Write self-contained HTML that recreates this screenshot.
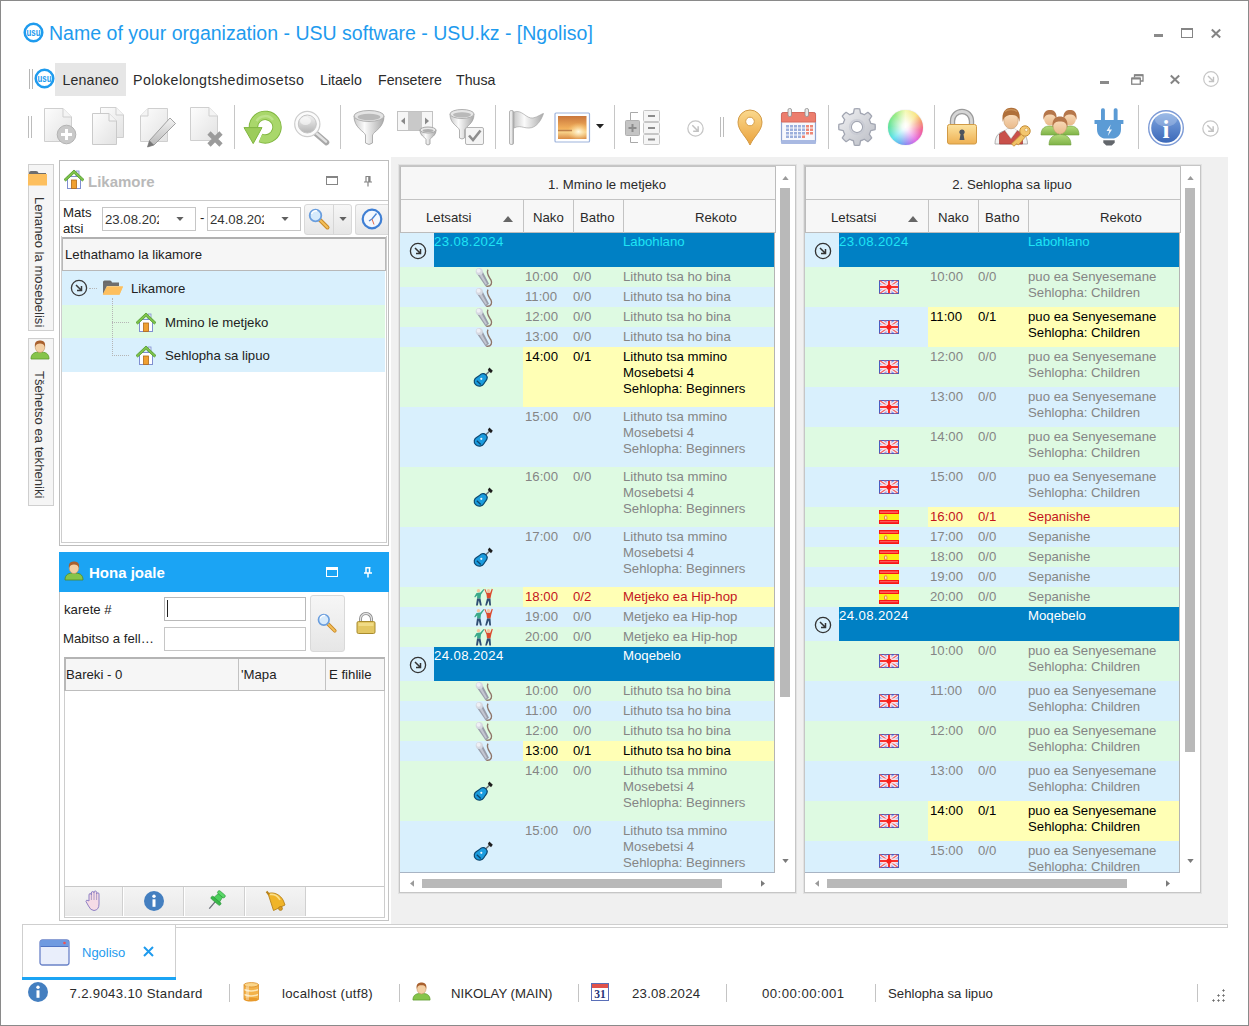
<!DOCTYPE html>
<html lang="st"><head><meta charset="utf-8"><title>Ngoliso</title>
<style>
*{box-sizing:border-box;margin:0;padding:0}
html,body{width:1249px;height:1026px;overflow:hidden;background:#fff}
body{font-family:"Liberation Sans","DejaVu Sans",sans-serif;font-size:13px;color:#222}
#win{position:absolute;left:0;top:0;width:1249px;height:1026px;background:#fff;overflow:hidden}
#frame{position:absolute;left:0;top:0;width:1249px;height:1026px;border:1px solid #8a8a8a;z-index:9}
.a{position:absolute}
.t{position:absolute;white-space:nowrap;line-height:1}
svg{position:absolute;overflow:visible}
/* title */
#title{left:49px;top:23.5px;font-size:19.55px;color:#1e9bee;letter-spacing:0px}
.menu{font-size:14.2px;color:#2b2b2b;top:72.5px}
/* main gray */
#main{left:391px;top:157px;width:837px;height:767px;background:#f0f0f0}
/* grids */
.grid{position:absolute;top:165px;width:397px;height:728px;background:#fff;border:1px solid #c6c6c6;box-shadow:0 0 0 1px #e2e2e2}
.ghead{position:absolute;left:0;top:0;width:376px;height:67px;background:#f7f7f7;border:1px solid #bcbcbc;border-top-color:#c4c4c4}
.gh{position:absolute;font-size:13.2px;color:#2a2a2a;white-space:nowrap;line-height:1}
.row{position:absolute;left:0;width:374px}
.g{background:#defae2}
.b{background:#d9f0fd}
.y{position:absolute;left:123px;right:0;top:0;bottom:0;background:#ffffb5}
.c{position:absolute;white-space:nowrap;line-height:16px;font-size:13.2px;color:#858585;top:2px}
.c1{left:125px}.c2{left:173px}.c3{left:223px}
.k .c{color:#000}
.r .c{color:#c3161c}
.grp{position:absolute;left:34px;right:0;top:0;bottom:0;background:#0080c4}
.grp .c{color:#fff;top:1px}
.grp.cy .c{color:#1fe5f5}
/* left */
.vt{position:absolute;left:28px;width:26px;border:1px solid #cfcfcf;background:#f5f5f5}
.vtx{position:absolute;white-space:nowrap;font-size:13.1px;color:#333;transform-origin:0 0;transform:rotate(90deg);line-height:1}
.panel{position:absolute;left:59px;width:330px;background:#fff;border:1px solid #bdbdbd}
.lt{position:absolute;white-space:nowrap;font-size:13.2px;color:#222;line-height:1}
.inp{position:absolute;background:#fff;border:1px solid #c6c6c6;overflow:hidden}
.btn{position:absolute;border:1px solid #d9d9d9;border-radius:3px;background:linear-gradient(#f6f6f6,#e6e6e6)}
.bb{position:absolute;top:887px;height:29px;width:60px;background:linear-gradient(#f4f4f4,#e9e9e9);border-right:1px solid #d0d0d0}
.st{position:absolute;white-space:nowrap;font-size:13.2px;color:#2a2a2a;line-height:1;top:987px}
.ss{position:absolute;top:984px;width:1px;height:18px;background:#c4c4c4}

</style></head>
<body>
<div id="win">
<!-- title bar -->
<svg class="a" style="left:23.200px;top:21.500px" width="21" height="21" viewBox="0 0 21 21"><circle cx="10.500" cy="10.500" r="8.800" fill="#fff" stroke="#1e9bee" stroke-width="2.500"/><text x="10.500" y="13.600" font-size="10.500" font-weight="bold" text-anchor="middle" fill="#1e9bee" font-family="Liberation Sans, sans-serif" textLength="14" lengthAdjust="spacingAndGlyphs">usu</text></svg>
<div class="t" id="title">Name of your organization - USU software - USU.kz - [Ngoliso]</div>
<div class="a" style="left:1154px;top:34px;width:9px;height:3px;background:#8a8a8a"></div>
<div class="a" style="left:1181px;top:28px;width:12px;height:10px;border:1.500px solid #858585;border-top-width:2.500px"></div>
<svg style="left:1211px;top:29px" width="10" height="9" viewBox="0 0 10 9"><path d="M0.800 0.500L9.200 8.500M9.200 0.500L0.800 8.500" stroke="#858585" stroke-width="2" fill="none"/></svg>
<!-- menu bar -->
<div class="a" style="left:29px;top:69px;width:1px;height:20px;background:#b5b5b5"></div>
<div class="a" style="left:31.500px;top:69px;width:1px;height:20px;background:#b5b5b5"></div>
<div class="a" style="left:55px;top:63px;width:71px;height:33px;background:#e6e6e6"></div>
<svg class="a" style="left:34.400px;top:68.300px" width="21" height="21" viewBox="0 0 21 21"><circle cx="10.500" cy="10.500" r="8.800" fill="#fff" stroke="#1e9bee" stroke-width="2.500"/><text x="10.500" y="13.600" font-size="10.500" font-weight="bold" text-anchor="middle" fill="#1e9bee" font-family="Liberation Sans, sans-serif" textLength="14" lengthAdjust="spacingAndGlyphs">usu</text></svg>
<div class="t menu" style="left:62.500px;letter-spacing:.15px">Lenaneo</div>
<div class="t menu" style="left:133px;letter-spacing:.42px">Polokelongtshedimosetso</div>
<div class="t menu" style="left:320px">Litaelo</div>
<div class="t menu" style="left:378px">Fensetere</div>
<div class="t menu" style="left:456px">Thusa</div>
<div class="a" style="left:1100px;top:81px;width:9px;height:3px;background:#8a8a8a"></div>
<svg style="left:1131px;top:74px" width="13" height="11" viewBox="0 0 13 11"><path d="M3.500 3.500V1H12V7H9.500" stroke="#858585" stroke-width="1.300" fill="none"/><path d="M3.500 1.300H12" stroke="#858585" stroke-width="2"/><rect x="0.700" y="4.200" width="8.600" height="6" stroke="#858585" stroke-width="1.300" fill="#fff"/><path d="M0.700 4.500H9.300" stroke="#858585" stroke-width="2"/></svg>
<svg style="left:1170px;top:75px" width="10" height="9" viewBox="0 0 10 9"><path d="M0.800 0.500L9.200 8.500M9.200 0.500L0.800 8.500" stroke="#858585" stroke-width="2" fill="none"/></svg>
<svg style="left:1203px;top:71px" width="16" height="16" viewBox="0 0 16 16"><circle cx="8" cy="8" r="7.300" fill="#fff" stroke="#c6c6c6" stroke-width="1.200"/><path d="M5 5L10.300 10.300M10.500 5.800V10.500H5.800" stroke="#c2c2c2" stroke-width="1.400" fill="none"/></svg>
<!-- toolbar -->
<svg width="0" height="0" style="position:absolute"><defs>
<linearGradient id="pg" x1="0" y1="0" x2="1" y2="1"><stop offset="0" stop-color="#fdfdfd"/><stop offset="1" stop-color="#e2e2e2"/></linearGradient>
<linearGradient id="sv" x1="0" y1="0" x2="1" y2="0"><stop offset="0" stop-color="#c9c9c9"/><stop offset=".35" stop-color="#fbfbfb"/><stop offset="1" stop-color="#a9a9a9"/></linearGradient>
<linearGradient id="sv2" x1="0" y1="0" x2="0" y2="1"><stop offset="0" stop-color="#f4f4f4"/><stop offset="1" stop-color="#b5b5b5"/></linearGradient>
<linearGradient id="gr" x1="0" y1="0" x2="0" y2="1"><stop offset="0" stop-color="#b5dd6e"/><stop offset="1" stop-color="#6fa82e"/></linearGradient>
<linearGradient id="or" x1="0" y1="0" x2="0" y2="1"><stop offset="0" stop-color="#fbd98e"/><stop offset="1" stop-color="#eaa23c"/></linearGradient>
<linearGradient id="lk" x1="0" y1="0" x2="0" y2="1"><stop offset="0" stop-color="#fce3a0"/><stop offset="1" stop-color="#eeb052"/></linearGradient>
<linearGradient id="sun" x1="0" y1="0" x2="0" y2="1"><stop offset="0" stop-color="#c9763c"/><stop offset=".55" stop-color="#f3b15c"/><stop offset=".7" stop-color="#f8d28a"/><stop offset="1" stop-color="#d98a44"/></linearGradient>
<radialGradient id="sunr" cx=".72" cy=".68" r=".4"><stop offset="0" stop-color="#fffbe6"/><stop offset="1" stop-color="#fbd27d" stop-opacity="0"/></radialGradient>
<linearGradient id="bl" x1="0" y1="0" x2="0" y2="1"><stop offset="0" stop-color="#7ea6e0"/><stop offset="1" stop-color="#3b68b8"/></linearGradient>
<linearGradient id="plg" x1="0" y1="0" x2="0" y2="1"><stop offset="0" stop-color="#6aa5dc"/><stop offset="1" stop-color="#3b78c0"/></linearGradient>
<linearGradient id="skin" x1="0" y1="0" x2="0" y2="1"><stop offset="0" stop-color="#fbe0c0"/><stop offset="1" stop-color="#e9b98a"/></linearGradient>
<linearGradient id="grn" x1="0" y1="0" x2="0" y2="1"><stop offset="0" stop-color="#b4da7a"/><stop offset="1" stop-color="#7fb347"/></linearGradient>
<linearGradient id="gear" x1="0" y1="0" x2="1" y2="1"><stop offset="0" stop-color="#f2f2f4"/><stop offset="1" stop-color="#b9bcc4"/></linearGradient>
</defs></svg>
<div class="a" style="left:28px;top:116px;width:1px;height:22px;background:#bcbcbc"></div>
<div class="a" style="left:31px;top:116px;width:1px;height:22px;background:#bcbcbc"></div>
<!-- 1 new -->
<svg style="left:40px;top:104px" width="40" height="44" viewBox="40 104 40 44"><path d="M44.5 108.5H63L71.5 117V141.5H44.5Z" fill="url(#pg)" stroke="#cfcfcf"/><path d="M63 108.5V117H71.5" fill="#f4f4f4" stroke="#cfcfcf"/><circle cx="66.5" cy="134.5" r="9.3" fill="#c9c9c9" stroke="#b3b3b3"/><path d="M66.5 129V140M61 134.5H72" stroke="#fff" stroke-width="3"/></svg>
<!-- 2 copy -->
<svg style="left:88px;top:104px" width="40" height="44" viewBox="88 104 40 44"><path d="M100.500 107.500H116L123.500 115V137.500H100.500Z" fill="url(#pg)" stroke="#cfcfcf"/><path d="M116 107.500V115H123.500" fill="#f4f4f4" stroke="#cfcfcf"/><path d="M92.500 113.500H109L116.500 121V144.500H92.500Z" fill="url(#pg)" stroke="#cacaca"/><path d="M109 113.500V121H116.500" fill="#f4f4f4" stroke="#cacaca"/></svg>
<!-- 3 edit -->
<svg style="left:136px;top:104px" width="42" height="46" viewBox="136 104 42 46"><path d="M148 108.500H167.500V141.500H140.500V116Z" fill="url(#pg)" stroke="#cfcfcf"/><path d="M148 108.500V116H140.500" fill="#f4f4f4" stroke="#cfcfcf"/><path d="M170 118L175.500 123.500L154 145L147.500 147L149.500 140.500Z" fill="url(#sv2)" stroke="#8e8e8e" stroke-width=".8"/><path d="M149.500 140.500L154 145L147.500 147Z" fill="#777"/></svg>
<!-- 4 delete -->
<svg style="left:186px;top:104px" width="42" height="46" viewBox="186 104 42 46"><path d="M190.500 107.500H209L217.500 116V140.500H190.500Z" fill="url(#pg)" stroke="#cfcfcf"/><path d="M209 107.500V116H217.500" fill="#f4f4f4" stroke="#cfcfcf"/><path d="M209 133L221 145M221 133L209 145" stroke="#9b9b9b" stroke-width="4.600" stroke-linecap="butt"/></svg>
<div class="a" style="left:234px;top:105px;width:1px;height:44px;background:#c6c6c6"></div>
<!-- 5 refresh -->
<svg style="left:240px;top:106px" width="46" height="44" viewBox="240 106 46 44"><path d="M253.400 127.200A11.800 11.800 0 1 1 260.500 138" fill="none" stroke="#7fb53e" stroke-width="9.400"/><path d="M253.400 127.200A11.800 11.800 0 1 1 260.500 138" fill="none" stroke="#a9d76b" stroke-width="7.600"/><path d="M256.500 121A10 10 0 0 1 273 120" fill="none" stroke="#c2e592" stroke-width="2.500" opacity=".8"/><path d="M244 127.600H262L253.200 143.600Z" fill="#9ccc5a" stroke="#7fb53e" stroke-width="1" stroke-linejoin="round"/></svg>
<!-- 6 search -->
<svg style="left:290px;top:106px" width="44" height="44" viewBox="290 106 44 44"><path d="M316 133.500L326.500 142.500" stroke="#a8a8a8" stroke-width="5.600" stroke-linecap="round"/><path d="M316 133L326 141.700" stroke="#e2e2e2" stroke-width="2.400" stroke-linecap="round"/><circle cx="307.300" cy="124" r="12.600" fill="#fbfbfb" stroke="#cdcdcd" stroke-width="1.200"/><circle cx="307.300" cy="124" r="9" fill="url(#sv2)" stroke="#c4c4c4" stroke-width="1"/><ellipse cx="305.500" cy="121" rx="5.500" ry="4" fill="#fff" opacity=".55"/></svg>
<div class="a" style="left:340px;top:105px;width:1px;height:44px;background:#c6c6c6"></div>
<!-- 7 funnel -->
<svg style="left:350px;top:106px" width="40" height="42" viewBox="350 106 40 42"><path d="M354 116C354 128 364 131 365.500 135V143Q369 146 372.500 143V135C374 131 384 128 384 116Z" fill="url(#sv)" stroke="#a0a0a0" stroke-width=".8"/><ellipse cx="369" cy="116" rx="15" ry="5.500" fill="#e4e4e4" stroke="#b0b0b0"/><ellipse cx="369" cy="117" rx="11.500" ry="3.300" fill="#b9b9b9"/></svg>
<!-- 8 column filter -->
<svg style="left:394px;top:106px" width="46" height="42" viewBox="394 106 46 42"><rect x="397.500" y="111.500" width="35" height="19" fill="#f6f6f6" stroke="#c2c2c2"/><rect x="408" y="112" width="14" height="18" fill="#c9c9c9"/><path d="M405 117.500V124.500L401 121Z" fill="#8a8a8a"/><path d="M425 117.500V124.500L429 121Z" fill="#8a8a8a"/><path d="M420 130C420 136 425 137 426 139.500V144Q428 146 430 144V139.500C431 137 436 136 436 130Z" fill="url(#sv)" stroke="#9a9a9a" stroke-width=".8"/><ellipse cx="428" cy="130" rx="8" ry="3" fill="#e8e8e8" stroke="#a8a8a8"/><ellipse cx="428" cy="130.500" rx="5.500" ry="1.600" fill="#b0b0b0"/></svg>
<!-- 9 funnel check -->
<svg style="left:446px;top:106px" width="42" height="42" viewBox="446 106 42 42"><path d="M450 114C450 124 458 126 459.500 130V138Q462 140 464.500 138V130C466 126 474 124 474 114Z" fill="url(#sv)" stroke="#a0a0a0" stroke-width=".8"/><ellipse cx="462" cy="114" rx="12" ry="4.500" fill="#e6e6e6" stroke="#b0b0b0"/><ellipse cx="462" cy="114.800" rx="9" ry="2.600" fill="#b9b9b9"/><rect x="465.500" y="127.500" width="18" height="17" rx="1.500" fill="#f4f4f4" stroke="#b4b4b4"/><path d="M469 135.500L473 140L480.500 130.500" fill="none" stroke="#8e8e8e" stroke-width="2.600"/></svg>
<div class="a" style="left:495px;top:105px;width:1px;height:44px;background:#c6c6c6"></div>
<!-- 10 flag -->
<svg style="left:505px;top:106px" width="42" height="42" viewBox="505 106 42 42"><path d="M514 112C522 109 526 119 533 118C538 117 541 114 543.500 113.500C541 121 536 128 529 128C523 128 520 125 514 128Z" fill="url(#sv)" stroke="#a8a8a8" stroke-width=".7"/><rect x="509.500" y="110.500" width="4" height="34" rx="1.500" fill="url(#sv)" stroke="#a0a0a0" stroke-width=".7"/></svg>
<!-- 11 image -->
<svg style="left:553px;top:110px" width="40" height="34" viewBox="553 110 40 34"><rect x="555" y="113" width="34.500" height="29" rx="1" fill="#fff" stroke="#9db3dc" stroke-width="1.200"/><rect x="558" y="116" width="28.500" height="23" fill="url(#sun)"/><rect x="558" y="116" width="28.500" height="23" fill="url(#sunr)"/><path d="M558 130.500H572" stroke="#a7663a" stroke-width="1.500" opacity=".7"/></svg>
<svg style="left:596px;top:124px" width="8" height="5" viewBox="0 0 8 5"><path d="M0 0H8L4 4.500Z" fill="#222"/></svg>
<div class="a" style="left:614px;top:105px;width:1px;height:44px;background:#c6c6c6"></div>
<!-- 12 tree -->
<svg style="left:622px;top:106px" width="42" height="42" viewBox="622 106 42 42"><path d="M638 112.500H630.500V120M630.500 137V142.500H638" fill="none" stroke="#a9a9a9"/><rect x="625.500" y="120.500" width="14" height="15" rx="1" fill="#c4c4c4" stroke="#b0b0b0"/><path d="M632.500 124V132M628.500 128H636.500" stroke="#8c8c8c" stroke-width="2"/><rect x="643.500" y="110.500" width="16" height="11" rx="1" fill="#f5f5f5" stroke="#c6c6c6"/><rect x="643.500" y="122.500" width="16" height="11" rx="1" fill="#f5f5f5" stroke="#c6c6c6"/><rect x="643.500" y="134.500" width="16" height="10" rx="1" fill="#f5f5f5" stroke="#c6c6c6"/><path d="M648 116H655M648 128H655M648 139.500H655" stroke="#8c8c8c" stroke-width="2"/></svg>
<svg style="left:687px;top:120px" width="17" height="17" viewBox="0 0 16 16"><circle cx="8" cy="8" r="7.200" fill="#fff" stroke="#c6c6c6" stroke-width="1.200"/><path d="M5 5L10.300 10.300M10.500 5.800V10.500H5.800" stroke="#c2c2c2" stroke-width="1.400" fill="none"/></svg>
<div class="a" style="left:720px;top:117px;width:1px;height:20px;background:#bcbcbc"></div>
<div class="a" style="left:723px;top:117px;width:1px;height:20px;background:#bcbcbc"></div>
<!-- 13 pin -->
<svg style="left:734px;top:106px" width="34" height="42" viewBox="734 106 34 42"><path d="M750 145C746 136 738 131 738 122A12 12 0 0 1 762 122C762 131 754 136 750 145Z" fill="url(#or)" stroke="#d29a45" stroke-width="1"/><circle cx="750" cy="121.500" r="4.300" fill="#fff" stroke="#d8a04a"/></svg>
<!-- 14 calendar -->
<svg style="left:778px;top:106px" width="42" height="42" viewBox="778 106 42 42"><rect x="781.500" y="112.500" width="34" height="31" rx="2" fill="#f7f8fc" stroke="#8fa3d0" stroke-width="1.200"/><path d="M781.500 122V114.500Q781.500 112.500 783.500 112.500H813.500Q815.500 112.500 815.500 114.500V122Z" fill="#ec7d6d" stroke="#d66a5c"/><rect x="781" y="140" width="35" height="4" rx="1.500" fill="#a9b9e2"/><rect x="788" y="108.500" width="3.500" height="8" rx="1.500" fill="#e8e8e8" stroke="#8d8d8d" stroke-width=".8"/><rect x="805" y="108.500" width="3.500" height="8" rx="1.500" fill="#e8e8e8" stroke="#8d8d8d" stroke-width=".8"/><g fill="#9db0dc"><rect x="786" y="125" width="3" height="2.500"/><rect x="790" y="125" width="3" height="2.500"/><rect x="794" y="125" width="3" height="2.500"/><rect x="798" y="125" width="3" height="2.500"/><rect x="802" y="125" width="3" height="2.500"/><rect x="786" y="128.500" width="3" height="2.500"/><rect x="790" y="128.500" width="3" height="2.500"/><rect x="794" y="128.500" width="3" height="2.500"/><rect x="798" y="128.500" width="3" height="2.500"/><rect x="802" y="128.500" width="3" height="2.500"/><rect x="786" y="132" width="3" height="2.500"/><rect x="790" y="132" width="3" height="2.500"/><rect x="794" y="132" width="3" height="2.500"/><rect x="798" y="132" width="3" height="2.500"/><rect x="802" y="132" width="3" height="2.500"/><rect x="786" y="135.500" width="3" height="2.500"/><rect x="790" y="135.500" width="3" height="2.500"/><rect x="794" y="135.500" width="3" height="2.500"/><rect x="798" y="135.500" width="3" height="2.500"/></g><g fill="#ef8877"><rect x="806" y="125" width="3" height="2.500"/><rect x="810" y="125" width="3" height="2.500"/><rect x="806" y="128.500" width="3" height="2.500"/><rect x="810" y="128.500" width="3" height="2.500"/><rect x="806" y="132" width="3" height="2.500"/><rect x="810" y="132" width="3" height="2.500"/><rect x="802" y="135.500" width="3" height="2.500"/></g></svg>
<div class="a" style="left:828px;top:105px;width:1px;height:44px;background:#c6c6c6"></div>
<!-- 15 gear -->
<svg style="left:835.500px;top:106.200px" width="42" height="42" viewBox="-21 -21 42 42"><path d="M-3.56 -13.75L-2.70 -18.10A18.30 18.30 0 0 1 2.70 -18.10L3.56 -13.75A14.20 14.20 0 0 1 7.21 -12.24L10.89 -14.71A18.30 18.30 0 0 1 14.71 -10.89L12.24 -7.21A14.20 14.20 0 0 1 13.75 -3.56L18.10 -2.70A18.30 18.30 0 0 1 18.10 2.70L13.75 3.56A14.20 14.20 0 0 1 12.24 7.21L14.71 10.89A18.30 18.30 0 0 1 10.89 14.71L7.21 12.24A14.20 14.20 0 0 1 3.56 13.75L2.70 18.10A18.30 18.30 0 0 1 -2.70 18.10L-3.56 13.75A14.20 14.20 0 0 1 -7.21 12.24L-10.89 14.71A18.30 18.30 0 0 1 -14.71 10.89L-12.24 7.21A14.20 14.20 0 0 1 -13.75 3.56L-18.10 2.70A18.30 18.30 0 0 1 -18.10 -2.70L-13.75 -3.56A14.20 14.20 0 0 1 -12.24 -7.21L-14.71 -10.89A18.30 18.30 0 0 1 -10.89 -14.71L-7.21 -12.24A14.20 14.20 0 0 1 -3.56 -13.75Z" fill="url(#gear)" stroke="#a2a6b2" stroke-width="1.300" stroke-linejoin="round"/><circle r="7.300" fill="none" stroke="#c4c8d2" stroke-width="1.500" opacity=".7"/><circle r="5.600" fill="#fff" stroke="#a2a6b2" stroke-width="1.100"/></svg>
<!-- 16 wheel -->
<div class="a" style="left:888px;top:110px;width:35px;height:35px;border-radius:50%;background:radial-gradient(circle at 50% 48%,#fff 0,rgba(255,255,255,.9) 14%,rgba(255,255,255,0) 72%),conic-gradient(from 0deg,#f2f8a8 0deg,#f8e070 40deg,#f28a60 70deg,#f0508c 100deg,#e25ee0 140deg,#9080f0 175deg,#60b0f0 200deg,#50e0e8 230deg,#50e090 275deg,#84e870 320deg,#f2f8a8 360deg);box-shadow:0 0 1px rgba(120,120,120,.5)"></div>
<div class="a" style="left:934px;top:105px;width:1px;height:44px;background:#c6c6c6"></div>
<!-- 17 lock -->
<svg style="left:944px;top:106px" width="38" height="42" viewBox="944 106 38 42"><path d="M952.500 126V121A9.500 9.500 0 0 1 971.500 121V126" fill="none" stroke="#9a9a9a" stroke-width="5.400"/><path d="M952.500 126V121A9.500 9.500 0 0 1 971.500 121V126" fill="none" stroke="#d6d6d6" stroke-width="2.800"/><rect x="947.500" y="124.500" width="29" height="19.500" rx="2" fill="url(#lk)" stroke="#d19a45"/><path d="M962 129.500A2.600 2.600 0 0 1 963.500 134.300L964.500 140H959.500L960.500 134.300A2.600 2.600 0 0 1 962 129.500Z" fill="#4c545e"/></svg>
<!-- 18 user key -->
<svg style="left:992px;top:106px" width="42" height="42" viewBox="992 106 42 42"><path d="M995 144C995 135 1000 131.500 1006 130.500H1016C1022 131.500 1027.500 135 1027.500 144Z" fill="#f2f2f2" stroke="#a9a9a9" stroke-width=".9"/><path d="M999.500 144V134L1005 130.800L1011 139L1017 130.800L1022.500 134V144Z" fill="#c9504a" stroke="#a23a36" stroke-width=".7"/><path d="M1005 130.500L1011 138.500L1017 130.500L1014.500 128.500H1007.500Z" fill="#fafafa" stroke="#c4c4c4" stroke-width=".6"/><ellipse cx="1011" cy="120.500" rx="7.200" ry="8.300" fill="url(#skin)" stroke="#c79a6c" stroke-width=".6"/><path d="M1002.800 122C1001 111.500 1006.500 107.500 1011.500 107.800C1017.500 108 1021 112.500 1019.300 122C1018.500 116.500 1016.500 114.500 1011 115C1006.500 115 1003.800 117 1002.800 122Z" fill="#b0703a"/><path d="M1005 111.500C1008 109 1014 109 1017 111.500" stroke="#d09a60" stroke-width="1.300" fill="none" opacity=".8"/><circle cx="1025" cy="131" r="5.200" fill="#f3c66e" stroke="#c48c36"/><circle cx="1026.300" cy="129.800" r="1.600" fill="#fdf4dc" stroke="#c48c36" stroke-width=".5"/><path d="M1021.300 134.200L1011.500 143.800L1013.800 146.200L1016.800 143.800L1018.300 145L1024.800 137.500Z" fill="#f1c266" stroke="#c48c36" stroke-width=".8"/></svg>
<!-- 19 users -->
<svg style="left:1038px;top:106px" width="44" height="42" viewBox="1038 106 44 42"><g><path d="M1041 135C1041 128 1045 126 1050 126S1059 128 1059 135Z" fill="url(#grn)" stroke="#6f9e3e" stroke-width=".6"/><ellipse cx="1050" cy="118.500" rx="6" ry="7" fill="url(#skin)"/><path d="M1043.500 120C1042.500 111 1047 110 1050 110S1057.500 111 1056.500 120C1055.500 115.500 1053 114.500 1050 114.500S1044.500 115.500 1043.500 120Z" fill="#b5764a"/></g><g><path d="M1061 135C1061 128 1065 126 1070 126S1079 128 1079 135Z" fill="url(#grn)" stroke="#6f9e3e" stroke-width=".6"/><ellipse cx="1070" cy="118.500" rx="6" ry="7" fill="url(#skin)"/><path d="M1063.500 120C1062.500 111 1067 110 1070 110S1077.500 111 1076.500 120C1075.500 115.500 1073 114.500 1070 114.500S1064.500 115.500 1063.500 120Z" fill="#b5764a"/></g><g><path d="M1049 145C1049 137 1054 134.500 1060 134.500S1071 137 1071 145Z" fill="url(#grn)" stroke="#6f9e3e" stroke-width=".6"/><ellipse cx="1060" cy="126" rx="6.800" ry="8" fill="url(#skin)" stroke="#c79a6c" stroke-width=".5"/><path d="M1052.500 128C1051.500 118 1056.500 116.500 1060 116.500S1068.500 118 1067.500 128C1066.500 122.500 1064 121.500 1060 121.500S1053.500 122.500 1052.500 128Z" fill="#b5764a"/></g></svg>
<!-- 20 plug -->
<svg style="left:1090px;top:106px" width="38" height="44" viewBox="1090 106 38 44"><rect x="1101" y="108.300" width="3.900" height="13" rx="1.600" fill="#5b9bd5"/><rect x="1113.700" y="108.300" width="3.900" height="13" rx="1.600" fill="#5b9bd5"/><path d="M1094.500 119.900H1123.400V124H1121V129.500C1121 135.500 1116.500 138.600 1112.500 138.600H1105.500C1101.500 138.600 1097 135.500 1097 129.500V124H1094.500Z" fill="#5b9bd5"/><path d="M1110.800 124.500L1106.500 131H1109.200L1107.800 136L1112 129.500H1109.300Z" fill="#f0f6fc"/><path d="M1103.300 140.300H1114.700V142.800L1111.700 145.600H1106.300L1103.300 142.800Z" fill="#63676c"/></svg>
<div class="a" style="left:1138px;top:105px;width:1px;height:44px;background:#c6c6c6"></div>
<!-- 21 info -->
<svg style="left:1146px;top:108px" width="40" height="40" viewBox="1146 108 40 40"><circle cx="1166" cy="128" r="17.300" fill="#fff" stroke="#7d9bd6" stroke-width="1.400"/><circle cx="1166" cy="128" r="14.800" fill="url(#bl)"/><ellipse cx="1166" cy="120" rx="11" ry="6.500" fill="#fff" opacity=".22"/><text x="1166" y="137.500" text-anchor="middle" font-family="Liberation Serif, serif" font-weight="bold" font-size="25" fill="#fff">i</text></svg>
<svg style="left:1202px;top:120px" width="17" height="17" viewBox="0 0 16 16"><circle cx="8" cy="8" r="7.200" fill="#fff" stroke="#c6c6c6" stroke-width="1.200"/><path d="M5 5L10.300 10.300M10.500 5.800V10.500H5.800" stroke="#c2c2c2" stroke-width="1.400" fill="none"/></svg>
<!-- side tabs -->
<div class="vt" style="top:164px;height:167px"></div>
<svg style="left:28px;top:170px" width="20" height="16" viewBox="0 0 20 16"><path d="M1 3Q1 1 3 1H8Q10 1 10.500 3H18V6H1Z" fill="#6e6e6e"/><rect x="0" y="4" width="19" height="11.500" fill="#fdbf5e"/></svg>
<div class="vtx" style="left:46px;top:197px">Lenaneo la mosebelisi</div>
<div class="vt" style="top:338px;height:168px"></div>
<svg style="left:30px;top:340px" width="20" height="20" viewBox="0 0 20 20"><path d="M1 19C1 13 5 12 10 12S19 13 19 19Z" fill="#86c44a" stroke="#5c9a2c" stroke-width=".8"/><ellipse cx="10" cy="7" rx="4.800" ry="5.500" fill="#f3cfa4" stroke="#c4935f" stroke-width=".6"/><path d="M5 7C4 1 8 .5 10 .5S16 1 15 7C14 4 12.500 3.500 10 3.500S6 4 5 7Z" fill="#a8602e"/></svg>
<div class="vtx" style="left:46px;top:371px">Tšehetso ea tekheniki</div>
<!-- Likamore panel -->
<div class="panel" style="top:160px;height:386px"></div>
<div class="a" style="left:60px;top:200px;width:328px;height:1px;background:#c9c9c9"></div>
<svg style="left:63px;top:168px" width="22" height="22" viewBox="0 0 22 22" id="house"><rect x="4.500" y="8.500" width="13" height="12" fill="#fdfdff" stroke="#7f8fd0"/><rect x="13" y="3" width="3" height="5" fill="#e8ecf8" stroke="#7f8fd0" stroke-width=".8"/><path d="M1 11.500L11 2L21 11.500L19.300 13L11 5.300L2.700 13Z" fill="#7ec24a" stroke="#4f9a2a" stroke-width=".8"/><rect x="8.500" y="12" width="5" height="8.500" fill="#f0a030" stroke="#b06a18" stroke-width=".8"/></svg>
<div class="lt" style="left:88px;top:174px;font-size:15px;font-weight:bold;color:#b9b9b9">Likamore</div>
<div class="a" style="left:326px;top:176px;width:12px;height:9px;border:1px solid #858585;border-top-width:2px"></div>
<svg style="left:363px;top:176px" width="10" height="11" viewBox="0 0 10 11"><path d="M2.500 0.500H7.500M3 0.500V5.500M7 0.500V5.500M5.800 0.500V5.500M1 6H9M5 6V10.500" stroke="#858585" stroke-width="1.200" fill="none"/></svg>
<div class="lt" style="left:63px;top:205px;line-height:16px">Mats<br>atsi</div>
<div class="inp" style="left:102px;top:207px;width:94px;height:24px"><div class="lt" style="left:2px;top:5px;width:54px;overflow:hidden;color:#333">23.08.2024</div></div>
<svg style="left:175.500px;top:217px" width="8" height="4" viewBox="0 0 9 5"><path d="M0 0H9L4.500 5Z" fill="#606060"/></svg>
<div class="lt" style="left:200px;top:211px">-</div>
<div class="inp" style="left:207px;top:207px;width:94px;height:24px"><div class="lt" style="left:2px;top:5px;width:54px;overflow:hidden;color:#333">24.08.2024</div></div>
<svg style="left:280.500px;top:217px" width="8" height="4" viewBox="0 0 9 5"><path d="M0 0H9L4.500 5Z" fill="#606060"/></svg>
<div class="btn" style="left:304px;top:204px;width:48px;height:31px"></div>
<div class="a" style="left:333px;top:205px;width:1px;height:29px;background:#d6d6d6"></div>
<svg style="left:307px;top:207px" width="24" height="24" viewBox="0 0 24 24" id="mag"><path d="M13 13L20.500 20.500" stroke="#c98a2a" stroke-width="4" stroke-linecap="round"/><path d="M13 13L20.500 20.500" stroke="#f4c05a" stroke-width="2" stroke-linecap="round"/><circle cx="8.500" cy="8.500" r="5.800" fill="#d6eafc" stroke="#6a9ede" stroke-width="1.800"/><path d="M4.500 7A4.500 4.500 0 0 1 10 4" stroke="#fff" stroke-width="1.500" fill="none"/></svg>
<svg style="left:338.500px;top:217px" width="8" height="4" viewBox="0 0 9 5"><path d="M0 0H9L4.500 5Z" fill="#606060"/></svg>
<div class="btn" style="left:355px;top:204px;width:33px;height:31px;border-right:none;border-radius:3px 0 0 3px"></div>
<svg style="left:361px;top:208px" width="22" height="22" viewBox="0 0 22 22"><circle cx="11" cy="11" r="9.300" fill="#f4f8fe" stroke="#3f7fd4" stroke-width="2.200"/><path d="M11 11L15.500 5.500M11 11L8 13" stroke="#4a86d6" stroke-width="1.400"/><path d="M11 11L13 16.500" stroke="#e46a4a" stroke-width="1"/></svg>
<!-- tree -->
<div class="a" style="left:62px;top:237px;width:324px;height:34px;background:#f6f6f6;border:1px solid #b8b8b8;border-top:2px solid #b0b0b0"></div>
<div class="lt" style="left:65px;top:248px">Lethathamo la likamore</div>
<div class="a b" style="left:62px;top:271px;width:323px;height:34px"></div>
<div class="a g" style="left:62px;top:305px;width:323px;height:33px"></div>
<div class="a b" style="left:62px;top:338px;width:323px;height:34px"></div>
<svg style="left:70px;top:279px" width="18" height="18" viewBox="0 0 18 18" class="exp"><circle cx="9" cy="9" r="7.600" fill="none" stroke="#3a3a3a" stroke-width="1.300"/><path d="M6 6L11.300 11.300M11.500 7V11.500H7" stroke="#3a3a3a" stroke-width="1.500" fill="none"/></svg>
<div class="a" style="left:89px;top:288px;width:8px;border-top:1px dotted #b5b5b5"></div>
<div class="a" style="left:112px;top:298px;height:58px;border-left:1px dotted #b5b5b5"></div>
<div class="a" style="left:112px;top:322px;width:17px;border-top:1px dotted #b5b5b5"></div>
<div class="a" style="left:112px;top:355px;width:17px;border-top:1px dotted #b5b5b5"></div>
<svg style="left:102px;top:280px" width="22" height="16" viewBox="0 0 22 16"><path d="M1 2Q1 .5 2.500 .5H8Q9.500 .5 10 2.500H17V6H1Z" fill="#6a6a6a"/><path d="M1 5V14.500H17.500L21 6.500H5L1 13Z" fill="#fdbf5e"/><path d="M1 3V14L5 6H17V3Z" fill="#6e6e6e"/><path d="M0.800 14.800H17.500L21 6.500H4.800Z" fill="#fdbf5e"/></svg>
<div class="lt" style="left:131px;top:282px">Likamore</div>
<svg style="left:135px;top:311px" width="22" height="22" viewBox="0 0 22 22"><rect x="4.500" y="8.500" width="13" height="12" fill="#fdfdff" stroke="#7f8fd0"/><rect x="13" y="3" width="3" height="5" fill="#e8ecf8" stroke="#7f8fd0" stroke-width=".8"/><path d="M1 11.500L11 2L21 11.500L19.300 13L11 5.300L2.700 13Z" fill="#7ec24a" stroke="#4f9a2a" stroke-width=".8"/><rect x="8.500" y="12" width="5" height="8.500" fill="#f0a030" stroke="#b06a18" stroke-width=".8"/></svg>
<div class="lt" style="left:165px;top:316px">Mmino le metjeko</div>
<svg style="left:135px;top:344px" width="22" height="22" viewBox="0 0 22 22"><rect x="4.500" y="8.500" width="13" height="12" fill="#fdfdff" stroke="#7f8fd0"/><rect x="13" y="3" width="3" height="5" fill="#e8ecf8" stroke="#7f8fd0" stroke-width=".8"/><path d="M1 11.500L11 2L21 11.500L19.300 13L11 5.300L2.700 13Z" fill="#7ec24a" stroke="#4f9a2a" stroke-width=".8"/><rect x="8.500" y="12" width="5" height="8.500" fill="#f0a030" stroke="#b06a18" stroke-width=".8"/></svg>
<div class="lt" style="left:165px;top:349px">Sehlopha sa lipuo</div>
<div class="a" style="left:61px;top:236px;width:326px;height:307px;border:1px solid #cdcdcd;border-top:none"></div>
<!-- Hona joale panel -->
<div class="panel" style="top:552px;height:369px;border-color:#c4c4c4"></div>
<div class="a" style="left:59px;top:552px;width:330px;height:40px;background:#1ba4f4"></div>
<svg style="left:64px;top:561px" width="20" height="20" viewBox="0 0 20 20"><path d="M1 19C1 13 5 12 10 12S19 13 19 19Z" fill="#86c44a" stroke="#4f8a26" stroke-width=".8"/><ellipse cx="10" cy="7" rx="4.800" ry="5.500" fill="#f3cfa4" stroke="#c4935f" stroke-width=".6"/><path d="M5 7C4 1 8 .5 10 .5S16 1 15 7C14 4 12.500 3.500 10 3.500S6 4 5 7Z" fill="#a8602e"/></svg>
<div class="lt" style="left:89px;top:565px;font-size:15px;font-weight:bold;color:#fff">Hona joale</div>
<div class="a" style="left:326px;top:567px;width:12px;height:10px;border:1px solid #fff;border-top-width:3px"></div>
<svg style="left:363px;top:567px" width="10" height="11" viewBox="0 0 10 11"><path d="M2.500 0.700H7.500M3 0.500V5.500M6.500 0.500V5.500M1 6H9M5 6V10.500" stroke="#fff" stroke-width="1.500" fill="none"/></svg>
<div class="lt" style="left:64px;top:603px">karete #</div>
<div class="inp" style="left:164px;top:597px;width:142px;height:24px;border-color:#b9b9b9"></div>
<div class="a" style="left:167px;top:600px;width:1px;height:17px;background:#222"></div>
<div class="lt" style="left:63px;top:632px">Mabitso a fell…</div>
<div class="inp" style="left:164px;top:627px;width:142px;height:24px"></div>
<div class="btn" style="left:310px;top:595px;width:35px;height:57px"></div>
<svg style="left:316px;top:612px" width="22" height="22" viewBox="0 0 24 24"><path d="M13 13L20.500 20.500" stroke="#c98a2a" stroke-width="4" stroke-linecap="round"/><path d="M13 13L20.500 20.500" stroke="#f4c05a" stroke-width="2" stroke-linecap="round"/><circle cx="8.500" cy="8.500" r="5.800" fill="#d6eafc" stroke="#6a9ede" stroke-width="1.800"/><path d="M4.500 7A4.500 4.500 0 0 1 10 4" stroke="#fff" stroke-width="1.500" fill="none"/></svg>
<svg style="left:356px;top:612px" width="20" height="23" viewBox="0 0 20 23"><path d="M4.500 10V7A5.500 5.500 0 0 1 15.500 7V10" fill="none" stroke="#8a8a8a" stroke-width="3"/><path d="M4.500 10V7A5.500 5.500 0 0 1 15.500 7V10" fill="none" stroke="#e4e4e4" stroke-width="1.300"/><rect x="1" y="9.500" width="18" height="12" rx="1.500" fill="#e3c763" stroke="#a98c2e"/><rect x="2.500" y="11" width="15" height="3" fill="#f2e08e" opacity=".8"/></svg>
<div class="a" style="left:64px;top:657px;width:321px;height:34px;background:#f6f6f6;border:1px solid #bdbdbd;border-top:2px solid #b4b4b4;border-left:2px solid #b8b8b8"></div>
<div class="a" style="left:238px;top:659px;width:1px;height:31px;background:#c2c2c2"></div>
<div class="a" style="left:325px;top:659px;width:1px;height:31px;background:#c2c2c2"></div>
<div class="lt" style="left:66px;top:668px">Bareki - 0</div>
<div class="lt" style="left:241px;top:668px">'Mapa</div>
<div class="lt" style="left:329px;top:668px">E fihlile</div>
<div class="a" style="left:64px;top:691px;width:321px;height:227px;border:1px solid #cdcdcd;border-top:none"></div>
<div class="a" style="left:65px;top:886px;width:319px;height:1px;background:#c8c8c8"></div>
<div class="bb" style="left:65px;width:58px"></div><div class="bb" style="left:124px"></div><div class="bb" style="left:185px"></div><div class="bb" style="left:246px"></div>
<!-- hand -->
<svg style="left:84.500px;top:890px" width="18" height="22" viewBox="0 0 18 22"><path d="M4 11V5Q4 3.500 5.200 3.500T6.400 5V3Q6.400 1.500 7.700 1.500T9 3V2.500Q9 1 10.300 1T11.600 2.500V4Q11.600 2.800 12.800 2.800T14 4V14Q14 20 9 20.500Q5.500 20.500 3.500 16L1 11.500Q1 9.500 3 10.500Z" fill="#f6dce6" stroke="#8e80c4" stroke-width="1"/><path d="M6.400 5V10M9 3V10M11.600 4V10" stroke="#9a8ec0" stroke-width=".8"/></svg>
<svg style="left:143px;top:890px" width="22" height="22" viewBox="0 0 22 22"><circle cx="11" cy="11" r="10" fill="#447fc0"/><circle cx="11" cy="6.300" r="1.700" fill="#fff"/><rect x="9.500" y="9.300" width="3" height="7.500" fill="#fff"/></svg>
<svg style="left:204px;top:889px" width="24" height="24" viewBox="204 889 24 24"><g transform="translate(217,899.500) rotate(40)"><path d="M0 3V12" stroke="#6a6e78" stroke-width="1.300"/><rect x="-6" y="0" width="12" height="3.200" rx="1.500" fill="#38b848" stroke="#2a9238" stroke-width=".6"/><path d="M-2.800 -5.500H2.800L3.600 .3H-3.600Z" fill="#4cd05c" stroke="#2a9238" stroke-width=".6"/><rect x="-4.500" y="-8.500" width="9" height="3.300" rx="1.500" fill="#5ad868" stroke="#2a9238" stroke-width=".6"/></g></svg>
<svg style="left:265px;top:890px" width="22" height="22" viewBox="0 0 22 22"><path d="M3 3.500C9 1.500 16 5 18.500 11L20 15L8.500 20.500Z" fill="#f0b428" stroke="#b8821a" stroke-width=".9"/><path d="M5 4.500C9 4 13 6 15 10" stroke="#fbe08a" stroke-width="1.600" fill="none"/><circle cx="15.500" cy="18.500" r="2" fill="#d89a20" stroke="#a87414" stroke-width=".6"/><path d="M1.500 1.500L4 4.500" stroke="#b8821a" stroke-width="2"/></svg>
<div class="a" id="main"></div>
<div class="grid" style="left:399px">
<div class="ghead"></div>
<div class="a" style="left:1px;top:33px;width:374px;height:1px;background:#c3c3c3"></div>
<div class="a" style="left:123px;top:34px;width:1px;height:33px;background:#c3c3c3"></div>
<div class="a" style="left:173px;top:34px;width:1px;height:33px;background:#c3c3c3"></div>
<div class="a" style="left:223px;top:34px;width:1px;height:33px;background:#c3c3c3"></div>
<div class="gh" style="left:1px;width:412px;text-align:center;top:12px">1. Mmino le metjeko</div>
<div class="gh" style="left:26px;top:45px">Letsatsi</div>
<svg style="left:103px;top:50px" width="10" height="6" viewBox="0 0 10 6"><path d="M0 6H10L5 0Z" fill="#666"/></svg>
<div class="gh" style="left:133px;top:45px">Nako</div>
<div class="gh" style="left:180px;top:45px">Batho</div>
<div class="gh" style="left:295px;top:45px">Rekoto</div>
<div class="a" style="left:0;top:67px;width:375px;height:640px;overflow:hidden;border-right:1px solid #b4b4b4;border-bottom:1px solid #a8b4c4">
<div class="row b" style="left:0;top:0px;height:34px"><svg style="left:9px;top:9px" width="18" height="18" viewBox="0 0 18 18"><circle cx="9" cy="9" r="7.600" fill="none" stroke="#333" stroke-width="1.300"/><path d="M6 6L11.300 11.300M11.500 7V11.500H7" stroke="#333" stroke-width="1.500" fill="none"/></svg><div class="grp cy"><div class="c" style="left:0;letter-spacing:.37px">23.08.2024</div><div class="c" style="left:189px">Labohlano</div></div></div>
<div class="row g " style="left:0;top:34px;height:20px"><svg style="left:73.5px;top:0px" width="20" height="20" viewBox="0 0 20 20"><path d="M14 2.600C11.800 6.500 15.200 9.800 17 13C18.500 16 17 19.400 13.500 19.300L12 18.800" fill="none" stroke="#8f7468" stroke-width="1.400"/><path d="M3 6.800L8 3.300L15 16.800L11.500 19.200Z" fill="#9a9eab"/><path d="M4.800 7L7 5.500L13 16.800L11.700 17.800Z" fill="#c3c6d1"/><circle cx="5.300" cy="4.500" r="3.600" fill="#d6d9e2"/><circle cx="4.600" cy="3.700" r="2" fill="#eff0f5"/></svg><div class="c c1">10:00</div><div class="c c2">0/0</div><div class="c c3">Lithuto tsa ho bina</div></div>
<div class="row b " style="left:0;top:54px;height:20px"><svg style="left:73.5px;top:0px" width="20" height="20" viewBox="0 0 20 20"><path d="M14 2.600C11.800 6.500 15.200 9.800 17 13C18.500 16 17 19.400 13.500 19.300L12 18.800" fill="none" stroke="#8f7468" stroke-width="1.400"/><path d="M3 6.800L8 3.300L15 16.800L11.500 19.200Z" fill="#9a9eab"/><path d="M4.800 7L7 5.500L13 16.800L11.700 17.800Z" fill="#c3c6d1"/><circle cx="5.300" cy="4.500" r="3.600" fill="#d6d9e2"/><circle cx="4.600" cy="3.700" r="2" fill="#eff0f5"/></svg><div class="c c1">11:00</div><div class="c c2">0/0</div><div class="c c3">Lithuto tsa ho bina</div></div>
<div class="row g " style="left:0;top:74px;height:20px"><svg style="left:73.5px;top:0px" width="20" height="20" viewBox="0 0 20 20"><path d="M14 2.600C11.800 6.500 15.200 9.800 17 13C18.500 16 17 19.400 13.500 19.300L12 18.800" fill="none" stroke="#8f7468" stroke-width="1.400"/><path d="M3 6.800L8 3.300L15 16.800L11.500 19.200Z" fill="#9a9eab"/><path d="M4.800 7L7 5.500L13 16.800L11.700 17.800Z" fill="#c3c6d1"/><circle cx="5.300" cy="4.500" r="3.600" fill="#d6d9e2"/><circle cx="4.600" cy="3.700" r="2" fill="#eff0f5"/></svg><div class="c c1">12:00</div><div class="c c2">0/0</div><div class="c c3">Lithuto tsa ho bina</div></div>
<div class="row b " style="left:0;top:94px;height:20px"><svg style="left:73.5px;top:0px" width="20" height="20" viewBox="0 0 20 20"><path d="M14 2.600C11.800 6.500 15.200 9.800 17 13C18.500 16 17 19.400 13.500 19.300L12 18.800" fill="none" stroke="#8f7468" stroke-width="1.400"/><path d="M3 6.800L8 3.300L15 16.800L11.500 19.200Z" fill="#9a9eab"/><path d="M4.800 7L7 5.500L13 16.800L11.700 17.800Z" fill="#c3c6d1"/><circle cx="5.300" cy="4.500" r="3.600" fill="#d6d9e2"/><circle cx="4.600" cy="3.700" r="2" fill="#eff0f5"/></svg><div class="c c1">13:00</div><div class="c c2">0/0</div><div class="c c3">Lithuto tsa ho bina</div></div>
<div class="row g k" style="left:0;top:114px;height:60px"><div class="y"></div><svg style="left:73px;top:19px" width="22" height="22" viewBox="0 0 22 22"><path d="M11.500 10L17.500 4.200" stroke="#6e7478" stroke-width="1.500"/><path d="M16.300 1.500L19.800 4.800L18 7.200L14.800 4Z" fill="#1e1e1e"/><path d="M9 7.800C11.800 6.800 15 10 14 12.800C13.300 14.800 12 15.500 11 17.500C9.500 20.500 5 21 2.600 18.600C.3 16.200 1 12.600 3.800 11.200C6 10.200 7.200 8.500 9 7.800Z" fill="#1a9cde" stroke="#0c4870" stroke-width="1.200"/><circle cx="8.300" cy="12.800" r="1.100" fill="#eaf6fc"/><path d="M3.800 14.800L7.800 18.500" stroke="#0c4870" stroke-width="1.400"/></svg><div class="c c1">14:00</div><div class="c c2">0/1</div><div class="c c3">Lithuto tsa mmino<br>Mosebetsi 4<br>Sehlopha: Beginners</div></div>
<div class="row b " style="left:0;top:174px;height:60px"><svg style="left:73px;top:19px" width="22" height="22" viewBox="0 0 22 22"><path d="M11.500 10L17.500 4.200" stroke="#6e7478" stroke-width="1.500"/><path d="M16.300 1.500L19.800 4.800L18 7.200L14.800 4Z" fill="#1e1e1e"/><path d="M9 7.800C11.800 6.800 15 10 14 12.800C13.300 14.800 12 15.500 11 17.500C9.500 20.500 5 21 2.600 18.600C.3 16.200 1 12.600 3.800 11.200C6 10.200 7.200 8.500 9 7.800Z" fill="#1a9cde" stroke="#0c4870" stroke-width="1.200"/><circle cx="8.300" cy="12.800" r="1.100" fill="#eaf6fc"/><path d="M3.800 14.800L7.800 18.500" stroke="#0c4870" stroke-width="1.400"/></svg><div class="c c1">15:00</div><div class="c c2">0/0</div><div class="c c3">Lithuto tsa mmino<br>Mosebetsi 4<br>Sehlopha: Beginners</div></div>
<div class="row g " style="left:0;top:234px;height:60px"><svg style="left:73px;top:19px" width="22" height="22" viewBox="0 0 22 22"><path d="M11.500 10L17.500 4.200" stroke="#6e7478" stroke-width="1.500"/><path d="M16.300 1.500L19.800 4.800L18 7.200L14.800 4Z" fill="#1e1e1e"/><path d="M9 7.800C11.800 6.800 15 10 14 12.800C13.300 14.800 12 15.500 11 17.500C9.500 20.500 5 21 2.600 18.600C.3 16.200 1 12.600 3.800 11.200C6 10.200 7.200 8.500 9 7.800Z" fill="#1a9cde" stroke="#0c4870" stroke-width="1.200"/><circle cx="8.300" cy="12.800" r="1.100" fill="#eaf6fc"/><path d="M3.800 14.800L7.800 18.500" stroke="#0c4870" stroke-width="1.400"/></svg><div class="c c1">16:00</div><div class="c c2">0/0</div><div class="c c3">Lithuto tsa mmino<br>Mosebetsi 4<br>Sehlopha: Beginners</div></div>
<div class="row b " style="left:0;top:294px;height:60px"><svg style="left:73px;top:19px" width="22" height="22" viewBox="0 0 22 22"><path d="M11.500 10L17.500 4.200" stroke="#6e7478" stroke-width="1.500"/><path d="M16.300 1.500L19.800 4.800L18 7.200L14.800 4Z" fill="#1e1e1e"/><path d="M9 7.800C11.800 6.800 15 10 14 12.800C13.300 14.800 12 15.500 11 17.500C9.500 20.500 5 21 2.600 18.600C.3 16.200 1 12.600 3.800 11.200C6 10.200 7.200 8.500 9 7.800Z" fill="#1a9cde" stroke="#0c4870" stroke-width="1.200"/><circle cx="8.300" cy="12.800" r="1.100" fill="#eaf6fc"/><path d="M3.800 14.800L7.800 18.500" stroke="#0c4870" stroke-width="1.400"/></svg><div class="c c1">17:00</div><div class="c c2">0/0</div><div class="c c3">Lithuto tsa mmino<br>Mosebetsi 4<br>Sehlopha: Beginners</div></div>
<div class="row g r" style="left:0;top:354px;height:20px"><div class="y"></div><svg style="left:73px;top:0px" width="22" height="20" viewBox="0 0 22 20"><g><circle cx="5.500" cy="3.800" r="1.700" fill="#f6c6a0"/><path d="M3.500 6L7.500 5.500L10.500 2L11.300 2.700L8 7.500L7.500 11.500H4L4.200 8.500L2 10.500L1.300 9.800Z" fill="#3aa98a"/><path d="M4 11.500H7.500L8.800 18.500H7L5.800 13.500L4.800 18.500H3Z" fill="#2e4d72"/></g><g><circle cx="15.500" cy="3.800" r="1.700" fill="#f6c6a0"/><path d="M11.300 2.300L12.300 2L13.800 5.800H17.200L18.800 1.800L19.800 2.200L18.300 7.500L17.500 11.500H14L13.500 7.500Z" fill="#dc4a2e"/><path d="M14 11.500H17.500L18 18.500H16.300L15.700 13.500L13.800 18.500H12.200Z" fill="#2e4d72"/></g></svg><div class="c c1">18:00</div><div class="c c2">0/2</div><div class="c c3">Metjeko ea Hip-hop</div></div>
<div class="row b " style="left:0;top:374px;height:20px"><svg style="left:73px;top:0px" width="22" height="20" viewBox="0 0 22 20"><g><circle cx="5.500" cy="3.800" r="1.700" fill="#f6c6a0"/><path d="M3.500 6L7.500 5.500L10.500 2L11.300 2.700L8 7.500L7.500 11.500H4L4.200 8.500L2 10.500L1.300 9.800Z" fill="#3aa98a"/><path d="M4 11.500H7.500L8.800 18.500H7L5.800 13.500L4.800 18.500H3Z" fill="#2e4d72"/></g><g><circle cx="15.500" cy="3.800" r="1.700" fill="#f6c6a0"/><path d="M11.300 2.300L12.300 2L13.800 5.800H17.200L18.800 1.800L19.800 2.200L18.300 7.500L17.500 11.500H14L13.500 7.500Z" fill="#dc4a2e"/><path d="M14 11.500H17.500L18 18.500H16.300L15.700 13.500L13.800 18.500H12.200Z" fill="#2e4d72"/></g></svg><div class="c c1">19:00</div><div class="c c2">0/0</div><div class="c c3">Metjeko ea Hip-hop</div></div>
<div class="row g " style="left:0;top:394px;height:20px"><svg style="left:73px;top:0px" width="22" height="20" viewBox="0 0 22 20"><g><circle cx="5.500" cy="3.800" r="1.700" fill="#f6c6a0"/><path d="M3.500 6L7.500 5.500L10.500 2L11.300 2.700L8 7.500L7.500 11.500H4L4.200 8.500L2 10.500L1.300 9.800Z" fill="#3aa98a"/><path d="M4 11.500H7.500L8.800 18.500H7L5.800 13.500L4.800 18.500H3Z" fill="#2e4d72"/></g><g><circle cx="15.500" cy="3.800" r="1.700" fill="#f6c6a0"/><path d="M11.300 2.300L12.300 2L13.800 5.800H17.200L18.800 1.800L19.800 2.200L18.300 7.500L17.500 11.500H14L13.500 7.500Z" fill="#dc4a2e"/><path d="M14 11.500H17.500L18 18.500H16.300L15.700 13.500L13.800 18.500H12.200Z" fill="#2e4d72"/></g></svg><div class="c c1">20:00</div><div class="c c2">0/0</div><div class="c c3">Metjeko ea Hip-hop</div></div>
<div class="row b" style="left:0;top:414px;height:34px"><svg style="left:9px;top:9px" width="18" height="18" viewBox="0 0 18 18"><circle cx="9" cy="9" r="7.600" fill="none" stroke="#333" stroke-width="1.300"/><path d="M6 6L11.300 11.300M11.500 7V11.500H7" stroke="#333" stroke-width="1.500" fill="none"/></svg><div class="grp "><div class="c" style="left:0;letter-spacing:.37px">24.08.2024</div><div class="c" style="left:189px">Moqebelo</div></div></div>
<div class="row g " style="left:0;top:448px;height:20px"><svg style="left:73.5px;top:0px" width="20" height="20" viewBox="0 0 20 20"><path d="M14 2.600C11.800 6.500 15.200 9.800 17 13C18.500 16 17 19.400 13.500 19.300L12 18.800" fill="none" stroke="#8f7468" stroke-width="1.400"/><path d="M3 6.800L8 3.300L15 16.800L11.500 19.200Z" fill="#9a9eab"/><path d="M4.800 7L7 5.500L13 16.800L11.700 17.800Z" fill="#c3c6d1"/><circle cx="5.300" cy="4.500" r="3.600" fill="#d6d9e2"/><circle cx="4.600" cy="3.700" r="2" fill="#eff0f5"/></svg><div class="c c1">10:00</div><div class="c c2">0/0</div><div class="c c3">Lithuto tsa ho bina</div></div>
<div class="row b " style="left:0;top:468px;height:20px"><svg style="left:73.5px;top:0px" width="20" height="20" viewBox="0 0 20 20"><path d="M14 2.600C11.800 6.500 15.200 9.800 17 13C18.500 16 17 19.400 13.500 19.300L12 18.800" fill="none" stroke="#8f7468" stroke-width="1.400"/><path d="M3 6.800L8 3.300L15 16.800L11.500 19.200Z" fill="#9a9eab"/><path d="M4.800 7L7 5.500L13 16.800L11.700 17.800Z" fill="#c3c6d1"/><circle cx="5.300" cy="4.500" r="3.600" fill="#d6d9e2"/><circle cx="4.600" cy="3.700" r="2" fill="#eff0f5"/></svg><div class="c c1">11:00</div><div class="c c2">0/0</div><div class="c c3">Lithuto tsa ho bina</div></div>
<div class="row g " style="left:0;top:488px;height:20px"><svg style="left:73.5px;top:0px" width="20" height="20" viewBox="0 0 20 20"><path d="M14 2.600C11.800 6.500 15.200 9.800 17 13C18.500 16 17 19.400 13.500 19.300L12 18.800" fill="none" stroke="#8f7468" stroke-width="1.400"/><path d="M3 6.800L8 3.300L15 16.800L11.500 19.200Z" fill="#9a9eab"/><path d="M4.800 7L7 5.500L13 16.800L11.700 17.800Z" fill="#c3c6d1"/><circle cx="5.300" cy="4.500" r="3.600" fill="#d6d9e2"/><circle cx="4.600" cy="3.700" r="2" fill="#eff0f5"/></svg><div class="c c1">12:00</div><div class="c c2">0/0</div><div class="c c3">Lithuto tsa ho bina</div></div>
<div class="row b k" style="left:0;top:508px;height:20px"><div class="y"></div><svg style="left:73.5px;top:0px" width="20" height="20" viewBox="0 0 20 20"><path d="M14 2.600C11.800 6.500 15.200 9.800 17 13C18.500 16 17 19.400 13.500 19.300L12 18.800" fill="none" stroke="#8f7468" stroke-width="1.400"/><path d="M3 6.800L8 3.300L15 16.800L11.500 19.200Z" fill="#9a9eab"/><path d="M4.800 7L7 5.500L13 16.800L11.700 17.800Z" fill="#c3c6d1"/><circle cx="5.300" cy="4.500" r="3.600" fill="#d6d9e2"/><circle cx="4.600" cy="3.700" r="2" fill="#eff0f5"/></svg><div class="c c1">13:00</div><div class="c c2">0/1</div><div class="c c3">Lithuto tsa ho bina</div></div>
<div class="row g " style="left:0;top:528px;height:60px"><svg style="left:73px;top:19px" width="22" height="22" viewBox="0 0 22 22"><path d="M11.500 10L17.500 4.200" stroke="#6e7478" stroke-width="1.500"/><path d="M16.300 1.500L19.800 4.800L18 7.200L14.800 4Z" fill="#1e1e1e"/><path d="M9 7.800C11.800 6.800 15 10 14 12.800C13.300 14.800 12 15.500 11 17.500C9.500 20.500 5 21 2.600 18.600C.3 16.200 1 12.600 3.800 11.200C6 10.200 7.200 8.500 9 7.800Z" fill="#1a9cde" stroke="#0c4870" stroke-width="1.200"/><circle cx="8.300" cy="12.800" r="1.100" fill="#eaf6fc"/><path d="M3.800 14.800L7.800 18.500" stroke="#0c4870" stroke-width="1.400"/></svg><div class="c c1">14:00</div><div class="c c2">0/0</div><div class="c c3">Lithuto tsa mmino<br>Mosebetsi 4<br>Sehlopha: Beginners</div></div>
<div class="row b " style="left:0;top:588px;height:60px"><svg style="left:73px;top:19px" width="22" height="22" viewBox="0 0 22 22"><path d="M11.500 10L17.500 4.200" stroke="#6e7478" stroke-width="1.500"/><path d="M16.300 1.500L19.800 4.800L18 7.200L14.800 4Z" fill="#1e1e1e"/><path d="M9 7.800C11.800 6.800 15 10 14 12.800C13.300 14.800 12 15.500 11 17.500C9.500 20.500 5 21 2.600 18.600C.3 16.200 1 12.600 3.800 11.200C6 10.200 7.200 8.500 9 7.800Z" fill="#1a9cde" stroke="#0c4870" stroke-width="1.200"/><circle cx="8.300" cy="12.800" r="1.100" fill="#eaf6fc"/><path d="M3.800 14.800L7.800 18.500" stroke="#0c4870" stroke-width="1.400"/></svg><div class="c c1">15:00</div><div class="c c2">0/0</div><div class="c c3">Lithuto tsa mmino<br>Mosebetsi 4<br>Sehlopha: Beginners</div></div>
</div>
<svg style="left:381.500px;top:10px" width="7" height="4" viewBox="0 0 8 5"><path d="M0 5H8L4 0Z" fill="#9a9a9a"/></svg>
<div class="a" style="left:380px;top:22px;width:10px;height:509px;background:#b9b9b9"></div>
<svg style="left:381.500px;top:693px" width="7" height="4" viewBox="0 0 8 5"><path d="M0 0H8L4 5Z" fill="#7a7a7a"/></svg>
<svg style="left:10px;top:713.500px" width="4" height="7" viewBox="0 0 5 8"><path d="M5 0V8L0 4Z" fill="#9a9a9a"/></svg>
<div class="a" style="left:22px;top:713px;width:300px;height:9px;background:#b9b9b9"></div>
<svg style="left:361px;top:713.500px" width="4" height="7" viewBox="0 0 5 8"><path d="M0 0V8L5 4Z" fill="#7a7a7a"/></svg>
</div>
<div class="grid" style="left:804px">
<div class="ghead"></div>
<div class="a" style="left:1px;top:33px;width:374px;height:1px;background:#c3c3c3"></div>
<div class="a" style="left:123px;top:34px;width:1px;height:33px;background:#c3c3c3"></div>
<div class="a" style="left:173px;top:34px;width:1px;height:33px;background:#c3c3c3"></div>
<div class="a" style="left:223px;top:34px;width:1px;height:33px;background:#c3c3c3"></div>
<div class="gh" style="left:1px;width:412px;text-align:center;top:12px">2. Sehlopha sa lipuo</div>
<div class="gh" style="left:26px;top:45px">Letsatsi</div>
<svg style="left:103px;top:50px" width="10" height="6" viewBox="0 0 10 6"><path d="M0 6H10L5 0Z" fill="#666"/></svg>
<div class="gh" style="left:133px;top:45px">Nako</div>
<div class="gh" style="left:180px;top:45px">Batho</div>
<div class="gh" style="left:295px;top:45px">Rekoto</div>
<div class="a" style="left:0;top:67px;width:375px;height:640px;overflow:hidden;border-right:1px solid #b4b4b4;border-bottom:1px solid #a8b4c4">
<div class="row b" style="left:0;top:0px;height:34px"><svg style="left:9px;top:9px" width="18" height="18" viewBox="0 0 18 18"><circle cx="9" cy="9" r="7.600" fill="none" stroke="#333" stroke-width="1.300"/><path d="M6 6L11.300 11.300M11.500 7V11.500H7" stroke="#333" stroke-width="1.500" fill="none"/></svg><div class="grp cy"><div class="c" style="left:0;letter-spacing:.37px">23.08.2024</div><div class="c" style="left:189px">Labohlano</div></div></div>
<div class="row g " style="left:0;top:34px;height:40px"><svg style="left:74px;top:13px;overflow:hidden" width="20" height="14" viewBox="0 0 20 14"><rect width="20" height="14" fill="#8f9fe6"/><path d="M0 0L20 14M20 0L0 14" stroke="#f3ecf8" stroke-width="3.600"/><path d="M0 0L20 14M20 0L0 14" stroke="#f4625e" stroke-width="1.200"/><path d="M10 0V14M0 7H20" stroke="#f8dfe6" stroke-width="5"/><path d="M10 0V14M0 7H20" stroke="#f9302c" stroke-width="2"/><circle cx="10" cy="7" r="2.600" fill="#f9211d"/><rect x=".5" y=".5" width="19" height="13" fill="none" stroke="#4a5cc0" stroke-width="1"/><path d="M0 .5H20M0 13.500H20" stroke="#c85a6e" stroke-width="1" stroke-dasharray="2.500 2.500" opacity=".7"/></svg><div class="c c1">10:00</div><div class="c c2">0/0</div><div class="c c3">puo ea Senyesemane<br>Sehlopha: Children</div></div>
<div class="row b k" style="left:0;top:74px;height:40px"><div class="y"></div><svg style="left:74px;top:13px;overflow:hidden" width="20" height="14" viewBox="0 0 20 14"><rect width="20" height="14" fill="#8f9fe6"/><path d="M0 0L20 14M20 0L0 14" stroke="#f3ecf8" stroke-width="3.600"/><path d="M0 0L20 14M20 0L0 14" stroke="#f4625e" stroke-width="1.200"/><path d="M10 0V14M0 7H20" stroke="#f8dfe6" stroke-width="5"/><path d="M10 0V14M0 7H20" stroke="#f9302c" stroke-width="2"/><circle cx="10" cy="7" r="2.600" fill="#f9211d"/><rect x=".5" y=".5" width="19" height="13" fill="none" stroke="#4a5cc0" stroke-width="1"/><path d="M0 .5H20M0 13.500H20" stroke="#c85a6e" stroke-width="1" stroke-dasharray="2.500 2.500" opacity=".7"/></svg><div class="c c1">11:00</div><div class="c c2">0/1</div><div class="c c3">puo ea Senyesemane<br>Sehlopha: Children</div></div>
<div class="row g " style="left:0;top:114px;height:40px"><svg style="left:74px;top:13px;overflow:hidden" width="20" height="14" viewBox="0 0 20 14"><rect width="20" height="14" fill="#8f9fe6"/><path d="M0 0L20 14M20 0L0 14" stroke="#f3ecf8" stroke-width="3.600"/><path d="M0 0L20 14M20 0L0 14" stroke="#f4625e" stroke-width="1.200"/><path d="M10 0V14M0 7H20" stroke="#f8dfe6" stroke-width="5"/><path d="M10 0V14M0 7H20" stroke="#f9302c" stroke-width="2"/><circle cx="10" cy="7" r="2.600" fill="#f9211d"/><rect x=".5" y=".5" width="19" height="13" fill="none" stroke="#4a5cc0" stroke-width="1"/><path d="M0 .5H20M0 13.500H20" stroke="#c85a6e" stroke-width="1" stroke-dasharray="2.500 2.500" opacity=".7"/></svg><div class="c c1">12:00</div><div class="c c2">0/0</div><div class="c c3">puo ea Senyesemane<br>Sehlopha: Children</div></div>
<div class="row b " style="left:0;top:154px;height:40px"><svg style="left:74px;top:13px;overflow:hidden" width="20" height="14" viewBox="0 0 20 14"><rect width="20" height="14" fill="#8f9fe6"/><path d="M0 0L20 14M20 0L0 14" stroke="#f3ecf8" stroke-width="3.600"/><path d="M0 0L20 14M20 0L0 14" stroke="#f4625e" stroke-width="1.200"/><path d="M10 0V14M0 7H20" stroke="#f8dfe6" stroke-width="5"/><path d="M10 0V14M0 7H20" stroke="#f9302c" stroke-width="2"/><circle cx="10" cy="7" r="2.600" fill="#f9211d"/><rect x=".5" y=".5" width="19" height="13" fill="none" stroke="#4a5cc0" stroke-width="1"/><path d="M0 .5H20M0 13.500H20" stroke="#c85a6e" stroke-width="1" stroke-dasharray="2.500 2.500" opacity=".7"/></svg><div class="c c1">13:00</div><div class="c c2">0/0</div><div class="c c3">puo ea Senyesemane<br>Sehlopha: Children</div></div>
<div class="row g " style="left:0;top:194px;height:40px"><svg style="left:74px;top:13px;overflow:hidden" width="20" height="14" viewBox="0 0 20 14"><rect width="20" height="14" fill="#8f9fe6"/><path d="M0 0L20 14M20 0L0 14" stroke="#f3ecf8" stroke-width="3.600"/><path d="M0 0L20 14M20 0L0 14" stroke="#f4625e" stroke-width="1.200"/><path d="M10 0V14M0 7H20" stroke="#f8dfe6" stroke-width="5"/><path d="M10 0V14M0 7H20" stroke="#f9302c" stroke-width="2"/><circle cx="10" cy="7" r="2.600" fill="#f9211d"/><rect x=".5" y=".5" width="19" height="13" fill="none" stroke="#4a5cc0" stroke-width="1"/><path d="M0 .5H20M0 13.500H20" stroke="#c85a6e" stroke-width="1" stroke-dasharray="2.500 2.500" opacity=".7"/></svg><div class="c c1">14:00</div><div class="c c2">0/0</div><div class="c c3">puo ea Senyesemane<br>Sehlopha: Children</div></div>
<div class="row b " style="left:0;top:234px;height:40px"><svg style="left:74px;top:13px;overflow:hidden" width="20" height="14" viewBox="0 0 20 14"><rect width="20" height="14" fill="#8f9fe6"/><path d="M0 0L20 14M20 0L0 14" stroke="#f3ecf8" stroke-width="3.600"/><path d="M0 0L20 14M20 0L0 14" stroke="#f4625e" stroke-width="1.200"/><path d="M10 0V14M0 7H20" stroke="#f8dfe6" stroke-width="5"/><path d="M10 0V14M0 7H20" stroke="#f9302c" stroke-width="2"/><circle cx="10" cy="7" r="2.600" fill="#f9211d"/><rect x=".5" y=".5" width="19" height="13" fill="none" stroke="#4a5cc0" stroke-width="1"/><path d="M0 .5H20M0 13.500H20" stroke="#c85a6e" stroke-width="1" stroke-dasharray="2.500 2.500" opacity=".7"/></svg><div class="c c1">15:00</div><div class="c c2">0/0</div><div class="c c3">puo ea Senyesemane<br>Sehlopha: Children</div></div>
<div class="row g r" style="left:0;top:274px;height:20px"><div class="y"></div><svg style="left:74px;top:3px" width="20" height="14" viewBox="0 0 20 14"><rect width="20" height="14" fill="#fb1414"/><rect y="4" width="20" height="6" fill="#fbf012"/><rect x="1" y="1.300" width="18" height="1.700" fill="#fc5a5a"/><rect x="1" y="11" width="18" height="1.300" fill="#fc5a5a"/><path d="M5 9.800V7Q5 5.300 6.700 5.300T8.400 7V9.800Z" fill="#f08a3c"/><rect x="6" y="6.500" width="1.500" height="2.300" fill="#fde8d0"/></svg><div class="c c1">16:00</div><div class="c c2">0/1</div><div class="c c3">Sepanishe</div></div>
<div class="row b " style="left:0;top:294px;height:20px"><svg style="left:74px;top:3px" width="20" height="14" viewBox="0 0 20 14"><rect width="20" height="14" fill="#fb1414"/><rect y="4" width="20" height="6" fill="#fbf012"/><rect x="1" y="1.300" width="18" height="1.700" fill="#fc5a5a"/><rect x="1" y="11" width="18" height="1.300" fill="#fc5a5a"/><path d="M5 9.800V7Q5 5.300 6.700 5.300T8.400 7V9.800Z" fill="#f08a3c"/><rect x="6" y="6.500" width="1.500" height="2.300" fill="#fde8d0"/></svg><div class="c c1">17:00</div><div class="c c2">0/0</div><div class="c c3">Sepanishe</div></div>
<div class="row g " style="left:0;top:314px;height:20px"><svg style="left:74px;top:3px" width="20" height="14" viewBox="0 0 20 14"><rect width="20" height="14" fill="#fb1414"/><rect y="4" width="20" height="6" fill="#fbf012"/><rect x="1" y="1.300" width="18" height="1.700" fill="#fc5a5a"/><rect x="1" y="11" width="18" height="1.300" fill="#fc5a5a"/><path d="M5 9.800V7Q5 5.300 6.700 5.300T8.400 7V9.800Z" fill="#f08a3c"/><rect x="6" y="6.500" width="1.500" height="2.300" fill="#fde8d0"/></svg><div class="c c1">18:00</div><div class="c c2">0/0</div><div class="c c3">Sepanishe</div></div>
<div class="row b " style="left:0;top:334px;height:20px"><svg style="left:74px;top:3px" width="20" height="14" viewBox="0 0 20 14"><rect width="20" height="14" fill="#fb1414"/><rect y="4" width="20" height="6" fill="#fbf012"/><rect x="1" y="1.300" width="18" height="1.700" fill="#fc5a5a"/><rect x="1" y="11" width="18" height="1.300" fill="#fc5a5a"/><path d="M5 9.800V7Q5 5.300 6.700 5.300T8.400 7V9.800Z" fill="#f08a3c"/><rect x="6" y="6.500" width="1.500" height="2.300" fill="#fde8d0"/></svg><div class="c c1">19:00</div><div class="c c2">0/0</div><div class="c c3">Sepanishe</div></div>
<div class="row g " style="left:0;top:354px;height:20px"><svg style="left:74px;top:3px" width="20" height="14" viewBox="0 0 20 14"><rect width="20" height="14" fill="#fb1414"/><rect y="4" width="20" height="6" fill="#fbf012"/><rect x="1" y="1.300" width="18" height="1.700" fill="#fc5a5a"/><rect x="1" y="11" width="18" height="1.300" fill="#fc5a5a"/><path d="M5 9.800V7Q5 5.300 6.700 5.300T8.400 7V9.800Z" fill="#f08a3c"/><rect x="6" y="6.500" width="1.500" height="2.300" fill="#fde8d0"/></svg><div class="c c1">20:00</div><div class="c c2">0/0</div><div class="c c3">Sepanishe</div></div>
<div class="row b" style="left:0;top:374px;height:34px"><svg style="left:9px;top:9px" width="18" height="18" viewBox="0 0 18 18"><circle cx="9" cy="9" r="7.600" fill="none" stroke="#333" stroke-width="1.300"/><path d="M6 6L11.300 11.300M11.500 7V11.500H7" stroke="#333" stroke-width="1.500" fill="none"/></svg><div class="grp "><div class="c" style="left:0;letter-spacing:.37px">24.08.2024</div><div class="c" style="left:189px">Moqebelo</div></div></div>
<div class="row g " style="left:0;top:408px;height:40px"><svg style="left:74px;top:13px;overflow:hidden" width="20" height="14" viewBox="0 0 20 14"><rect width="20" height="14" fill="#8f9fe6"/><path d="M0 0L20 14M20 0L0 14" stroke="#f3ecf8" stroke-width="3.600"/><path d="M0 0L20 14M20 0L0 14" stroke="#f4625e" stroke-width="1.200"/><path d="M10 0V14M0 7H20" stroke="#f8dfe6" stroke-width="5"/><path d="M10 0V14M0 7H20" stroke="#f9302c" stroke-width="2"/><circle cx="10" cy="7" r="2.600" fill="#f9211d"/><rect x=".5" y=".5" width="19" height="13" fill="none" stroke="#4a5cc0" stroke-width="1"/><path d="M0 .5H20M0 13.500H20" stroke="#c85a6e" stroke-width="1" stroke-dasharray="2.500 2.500" opacity=".7"/></svg><div class="c c1">10:00</div><div class="c c2">0/0</div><div class="c c3">puo ea Senyesemane<br>Sehlopha: Children</div></div>
<div class="row b " style="left:0;top:448px;height:40px"><svg style="left:74px;top:13px;overflow:hidden" width="20" height="14" viewBox="0 0 20 14"><rect width="20" height="14" fill="#8f9fe6"/><path d="M0 0L20 14M20 0L0 14" stroke="#f3ecf8" stroke-width="3.600"/><path d="M0 0L20 14M20 0L0 14" stroke="#f4625e" stroke-width="1.200"/><path d="M10 0V14M0 7H20" stroke="#f8dfe6" stroke-width="5"/><path d="M10 0V14M0 7H20" stroke="#f9302c" stroke-width="2"/><circle cx="10" cy="7" r="2.600" fill="#f9211d"/><rect x=".5" y=".5" width="19" height="13" fill="none" stroke="#4a5cc0" stroke-width="1"/><path d="M0 .5H20M0 13.500H20" stroke="#c85a6e" stroke-width="1" stroke-dasharray="2.500 2.500" opacity=".7"/></svg><div class="c c1">11:00</div><div class="c c2">0/0</div><div class="c c3">puo ea Senyesemane<br>Sehlopha: Children</div></div>
<div class="row g " style="left:0;top:488px;height:40px"><svg style="left:74px;top:13px;overflow:hidden" width="20" height="14" viewBox="0 0 20 14"><rect width="20" height="14" fill="#8f9fe6"/><path d="M0 0L20 14M20 0L0 14" stroke="#f3ecf8" stroke-width="3.600"/><path d="M0 0L20 14M20 0L0 14" stroke="#f4625e" stroke-width="1.200"/><path d="M10 0V14M0 7H20" stroke="#f8dfe6" stroke-width="5"/><path d="M10 0V14M0 7H20" stroke="#f9302c" stroke-width="2"/><circle cx="10" cy="7" r="2.600" fill="#f9211d"/><rect x=".5" y=".5" width="19" height="13" fill="none" stroke="#4a5cc0" stroke-width="1"/><path d="M0 .5H20M0 13.500H20" stroke="#c85a6e" stroke-width="1" stroke-dasharray="2.500 2.500" opacity=".7"/></svg><div class="c c1">12:00</div><div class="c c2">0/0</div><div class="c c3">puo ea Senyesemane<br>Sehlopha: Children</div></div>
<div class="row b " style="left:0;top:528px;height:40px"><svg style="left:74px;top:13px;overflow:hidden" width="20" height="14" viewBox="0 0 20 14"><rect width="20" height="14" fill="#8f9fe6"/><path d="M0 0L20 14M20 0L0 14" stroke="#f3ecf8" stroke-width="3.600"/><path d="M0 0L20 14M20 0L0 14" stroke="#f4625e" stroke-width="1.200"/><path d="M10 0V14M0 7H20" stroke="#f8dfe6" stroke-width="5"/><path d="M10 0V14M0 7H20" stroke="#f9302c" stroke-width="2"/><circle cx="10" cy="7" r="2.600" fill="#f9211d"/><rect x=".5" y=".5" width="19" height="13" fill="none" stroke="#4a5cc0" stroke-width="1"/><path d="M0 .5H20M0 13.500H20" stroke="#c85a6e" stroke-width="1" stroke-dasharray="2.500 2.500" opacity=".7"/></svg><div class="c c1">13:00</div><div class="c c2">0/0</div><div class="c c3">puo ea Senyesemane<br>Sehlopha: Children</div></div>
<div class="row g k" style="left:0;top:568px;height:40px"><div class="y"></div><svg style="left:74px;top:13px;overflow:hidden" width="20" height="14" viewBox="0 0 20 14"><rect width="20" height="14" fill="#8f9fe6"/><path d="M0 0L20 14M20 0L0 14" stroke="#f3ecf8" stroke-width="3.600"/><path d="M0 0L20 14M20 0L0 14" stroke="#f4625e" stroke-width="1.200"/><path d="M10 0V14M0 7H20" stroke="#f8dfe6" stroke-width="5"/><path d="M10 0V14M0 7H20" stroke="#f9302c" stroke-width="2"/><circle cx="10" cy="7" r="2.600" fill="#f9211d"/><rect x=".5" y=".5" width="19" height="13" fill="none" stroke="#4a5cc0" stroke-width="1"/><path d="M0 .5H20M0 13.500H20" stroke="#c85a6e" stroke-width="1" stroke-dasharray="2.500 2.500" opacity=".7"/></svg><div class="c c1">14:00</div><div class="c c2">0/1</div><div class="c c3">puo ea Senyesemane<br>Sehlopha: Children</div></div>
<div class="row b " style="left:0;top:608px;height:40px"><svg style="left:74px;top:13px;overflow:hidden" width="20" height="14" viewBox="0 0 20 14"><rect width="20" height="14" fill="#8f9fe6"/><path d="M0 0L20 14M20 0L0 14" stroke="#f3ecf8" stroke-width="3.600"/><path d="M0 0L20 14M20 0L0 14" stroke="#f4625e" stroke-width="1.200"/><path d="M10 0V14M0 7H20" stroke="#f8dfe6" stroke-width="5"/><path d="M10 0V14M0 7H20" stroke="#f9302c" stroke-width="2"/><circle cx="10" cy="7" r="2.600" fill="#f9211d"/><rect x=".5" y=".5" width="19" height="13" fill="none" stroke="#4a5cc0" stroke-width="1"/><path d="M0 .5H20M0 13.500H20" stroke="#c85a6e" stroke-width="1" stroke-dasharray="2.500 2.500" opacity=".7"/></svg><div class="c c1">15:00</div><div class="c c2">0/0</div><div class="c c3">puo ea Senyesemane<br>Sehlopha: Children</div></div>
</div>
<svg style="left:381.500px;top:10px" width="7" height="4" viewBox="0 0 8 5"><path d="M0 5H8L4 0Z" fill="#9a9a9a"/></svg>
<div class="a" style="left:380px;top:22px;width:10px;height:564px;background:#b9b9b9"></div>
<svg style="left:381.500px;top:693px" width="7" height="4" viewBox="0 0 8 5"><path d="M0 0H8L4 5Z" fill="#7a7a7a"/></svg>
<svg style="left:10px;top:713.500px" width="4" height="7" viewBox="0 0 5 8"><path d="M5 0V8L0 4Z" fill="#9a9a9a"/></svg>
<div class="a" style="left:22px;top:713px;width:300px;height:9px;background:#b9b9b9"></div>
<svg style="left:361px;top:713.500px" width="4" height="7" viewBox="0 0 5 8"><path d="M0 0V8L5 4Z" fill="#7a7a7a"/></svg>
</div><!-- bottom tab strip -->
<div class="a" style="left:22px;top:924px;width:1206px;height:4px;border:1px solid #cfcfcf;border-left:none;background:#fff"></div>
<div class="a" style="left:22px;top:924px;width:154px;height:54px;background:#fff;border:1px solid #cfcfcf;border-bottom:none"></div>
<div class="a" style="left:22px;top:977px;width:154px;height:3px;background:#1ba4f4"></div>
<svg style="left:39px;top:939px" width="32" height="28" viewBox="0 0 32 28"><rect x="1" y="1" width="29" height="25" rx="2.500" fill="#e9eefb" stroke="#6a82c8" stroke-width="1.300"/><path d="M1 7V3.500Q1 1 3.500 1H27.500Q30 1 30 3.500V7Z" fill="#6f9ae0"/><path d="M1.500 7.500H29.500" stroke="#4f74c4" stroke-width="1"/><circle cx="25.500" cy="4" r="1.300" fill="#f05050"/></svg>
<div class="lt" style="left:82px;top:946px;color:#1e9bee;font-size:13px">Ngoliso</div>
<svg style="left:143px;top:946px" width="11" height="11" viewBox="0 0 11 11"><path d="M1 1L10 10M10 1L1 10" stroke="#1e9bee" stroke-width="2" fill="none"/></svg>
<!-- status bar -->
<svg style="left:27px;top:981px" width="22" height="22" viewBox="0 0 22 22"><circle cx="11" cy="11" r="10" fill="#447fc0"/><circle cx="11" cy="6.300" r="1.700" fill="#fff"/><rect x="9.500" y="9.300" width="3" height="7.500" fill="#fff"/></svg>
<div class="st" style="left:69.500px;letter-spacing:.32px">7.2.9043.10 Standard</div>
<div class="ss" style="left:229px"></div>
<svg style="left:243px;top:982px" width="17" height="20" viewBox="0 0 17 20"><rect x="1" y="2" width="14.500" height="16" fill="#f3b24a"/><ellipse cx="8.250" cy="17.500" rx="7.250" ry="2" fill="#e89a2c"/><path d="M1 7.500Q8 10.500 15.500 7.500M1 12.500Q8 15.500 15.500 12.500" stroke="#fbe6b8" stroke-width="1.500" fill="none"/><ellipse cx="8.250" cy="2.800" rx="7.250" ry="2.200" fill="#fbd68a" stroke="#d98e28" stroke-width=".8"/><path d="M1 2.800V17.500M15.500 2.800V17.500" stroke="#d98e28" stroke-width=".8"/><rect x="3" y="4" width="3" height="14" fill="#fff" opacity=".35"/></svg>
<div class="st" style="left:282px;letter-spacing:.28px">localhost (utf8)</div>
<div class="ss" style="left:399px"></div>
<svg style="left:412px;top:982px" width="19" height="19" viewBox="0 0 20 20"><path d="M1 19C1 13 5 12 10 12S19 13 19 19Z" fill="#86c44a" stroke="#5c9a2c" stroke-width=".8"/><ellipse cx="10" cy="7" rx="4.800" ry="5.500" fill="#f3cfa4" stroke="#c4935f" stroke-width=".6"/><path d="M5 7C4 1 8 .5 10 .5S16 1 15 7C14 4 12.500 3.500 10 3.500S6 4 5 7Z" fill="#a8602e"/></svg>
<div class="st" style="left:451px">NIKOLAY (MAIN)</div>
<div class="ss" style="left:578px"></div>
<svg style="left:591px;top:982px" width="18" height="19" viewBox="0 0 18 19"><rect x=".5" y="1.500" width="17" height="17" fill="#fff" stroke="#5a6fb8"/><rect x="1" y="2" width="16" height="4" fill="#e0524a"/><text x="9" y="16" text-anchor="middle" font-family="Liberation Serif, serif" font-weight="bold" font-size="11.500" fill="#26357a">31</text></svg>
<div class="st" style="left:632px;letter-spacing:.23px">23.08.2024</div>
<div class="ss" style="left:726px"></div>
<div class="st" style="left:762px;letter-spacing:.46px">00:00:00:001</div>
<div class="ss" style="left:875px"></div>
<div class="st" style="left:888px">Sehlopha sa lipuo</div>
<div class="ss" style="left:1197px"></div>
<svg style="left:1211px;top:988px" width="16" height="16" viewBox="1211 988 16 16"><g fill="#9a9a9a"><rect x="1222" y="990" width="3" height="1"/><rect x="1223" y="989" width="1" height="3"/><rect x="1217" y="995" width="3" height="1"/><rect x="1218" y="994" width="1" height="3"/><rect x="1222" y="995" width="3" height="1"/><rect x="1223" y="994" width="1" height="3"/><rect x="1212" y="1000" width="3" height="1"/><rect x="1213" y="999" width="1" height="3"/><rect x="1217" y="1000" width="3" height="1"/><rect x="1218" y="999" width="1" height="3"/><rect x="1222" y="1000" width="3" height="1"/><rect x="1223" y="999" width="1" height="3"/></g><g fill="#6c6c6c"><rect x="1223" y="990" width="1" height="1"/><rect x="1218" y="995" width="1" height="1"/><rect x="1223" y="995" width="1" height="1"/><rect x="1213" y="1000" width="1" height="1"/><rect x="1218" y="1000" width="1" height="1"/><rect x="1223" y="1000" width="1" height="1"/></g></svg>
<div id="frame"></div>

</div>
</body></html>
